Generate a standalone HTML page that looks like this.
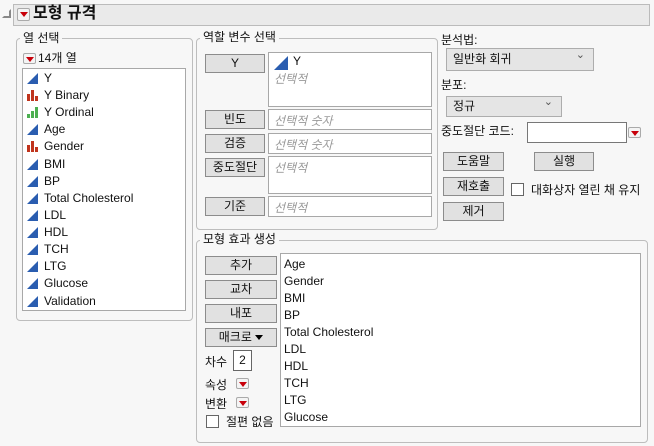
<!DOCTYPE html>
<html><head><meta charset="utf-8"><style>
*{box-sizing:border-box;margin:0;padding:0}
body{width:654px;height:446px;background:#f7f7f7;font-family:"Liberation Sans","Noto Sans CJK KR",sans-serif;font-size:12px;color:#111;position:relative;overflow:hidden}
.a{position:absolute;white-space:nowrap}
.grp{position:absolute;border:1px solid #bdbdbd;border-radius:4px}
.lg{position:absolute;background:#f7f7f7;padding:0 3px;font-size:12px;line-height:14px}
.box{position:absolute;background:#fff;border:1px solid #a8a8a8}
.btn{position:absolute;background:#e1e1e1;border:1px solid #8c8c8c;text-align:center;font-size:12px;line-height:16px;white-space:nowrap}
.rb{position:absolute;width:13px;height:11px;border:1px solid #aaa;border-radius:2px;background:#f4f4f4}
.rb:after{content:"";position:absolute;left:2px;top:3px;border-left:4px solid transparent;border-right:4px solid transparent;border-top:5px solid #c8000a}
.ph{color:#999;font-style:italic}
.it{position:absolute;left:0;width:340px;height:17px;line-height:17px;white-space:nowrap}
.cb{position:absolute;width:13px;height:13px;border:1px solid #666;background:#fff}
.sel{position:absolute;background:#e5e5e5;border:1px solid #adadad;line-height:20px;padding-left:6px}
.sel:after{content:"⌄";position:absolute;right:8px;top:-4px;font-size:11px;color:#555}
</style></head><body>
<div class="a" style="left:2px;top:9px;width:0;height:0;border-left:9px solid transparent;border-bottom:9px solid #888"></div>
<div class="a" style="left:3px;top:10px;width:0;height:0;border-left:6px solid transparent;border-bottom:6px solid #f7f7f7"></div>
<div class="a" style="left:13px;top:4px;width:637px;height:22px;background:#eaeaea;border:1px solid #bbb"></div>
<div class="rb" style="left:17px;top:8px;height:13px"></div>
<div class="a" style="left:33px;top:4px;font-size:16px;font-weight:bold;line-height:20px">모형 규격</div>

<div class="grp" style="left:16px;top:38px;width:177px;height:283px"></div>
<div class="lg" style="left:20px;top:31px">열 선택</div>
<div class="rb" style="left:23px;top:53px"></div>
<div class="a" style="left:38px;top:51px;line-height:14px">14개 열</div>
<div class="box" style="left:22px;top:68px;width:164px;height:243px">
<svg width="0" height="0" style="position:absolute"><defs>
<g id="c"><path d="M0 11 L11 0 L11 11Z" fill="#2a5db0"/></g>
<g id="n"><rect x="0" y="4" width="3" height="7" fill="#c0341d"/><rect x="4" y="0" width="3" height="11" fill="#c0341d"/><rect x="8" y="6" width="3" height="5" fill="#c0341d"/></g>
<g id="o"><rect x="0" y="7" width="3" height="4" fill="#4caf50"/><rect x="4" y="4" width="3" height="7" fill="#4caf50"/><rect x="8" y="0" width="3" height="11" fill="#4caf50"/></g>
</defs></svg>
<div style="position:absolute;left:4px;top:1px;width:155px">
<div class="it" style="top:0"><svg class="a" style="left:0;top:3px" width="11" height="11"><use href="#c"/></svg><span style="margin-left:17px">Y</span></div>
<div class="it" style="top:17px"><svg class="a" style="left:0;top:3px" width="11" height="11"><use href="#n"/></svg><span style="margin-left:17px">Y Binary</span></div>
<div class="it" style="top:34px"><svg class="a" style="left:0;top:3px" width="11" height="11"><use href="#o"/></svg><span style="margin-left:17px">Y Ordinal</span></div>
<div class="it" style="top:51px"><svg class="a" style="left:0;top:3px" width="11" height="11"><use href="#c"/></svg><span style="margin-left:17px">Age</span></div>
<div class="it" style="top:68px"><svg class="a" style="left:0;top:3px" width="11" height="11"><use href="#n"/></svg><span style="margin-left:17px">Gender</span></div>
<div class="it" style="top:86px"><svg class="a" style="left:0;top:3px" width="11" height="11"><use href="#c"/></svg><span style="margin-left:17px">BMI</span></div>
<div class="it" style="top:103px"><svg class="a" style="left:0;top:3px" width="11" height="11"><use href="#c"/></svg><span style="margin-left:17px">BP</span></div>
<div class="it" style="top:120px"><svg class="a" style="left:0;top:3px" width="11" height="11"><use href="#c"/></svg><span style="margin-left:17px">Total Cholesterol</span></div>
<div class="it" style="top:137px"><svg class="a" style="left:0;top:3px" width="11" height="11"><use href="#c"/></svg><span style="margin-left:17px">LDL</span></div>
<div class="it" style="top:154px"><svg class="a" style="left:0;top:3px" width="11" height="11"><use href="#c"/></svg><span style="margin-left:17px">HDL</span></div>
<div class="it" style="top:171px"><svg class="a" style="left:0;top:3px" width="11" height="11"><use href="#c"/></svg><span style="margin-left:17px">TCH</span></div>
<div class="it" style="top:188px"><svg class="a" style="left:0;top:3px" width="11" height="11"><use href="#c"/></svg><span style="margin-left:17px">LTG</span></div>
<div class="it" style="top:205px"><svg class="a" style="left:0;top:3px" width="11" height="11"><use href="#c"/></svg><span style="margin-left:17px">Glucose</span></div>
<div class="it" style="top:223px"><svg class="a" style="left:0;top:3px" width="11" height="11"><use href="#c"/></svg><span style="margin-left:17px">Validation</span></div>
</div></div>

<div class="grp" style="left:196px;top:38px;width:242px;height:192px"></div>
<div class="lg" style="left:200px;top:30px">역할 변수 선택</div>
<div class="btn" style="left:205px;top:54px;width:60px;height:19px">Y</div>
<div class="btn" style="left:205px;top:110px;width:60px;height:19px">빈도</div>
<div class="btn" style="left:205px;top:134px;width:60px;height:19px">검증</div>
<div class="btn" style="left:205px;top:158px;width:60px;height:19px">중도절단</div>
<div class="btn" style="left:205px;top:197px;width:60px;height:19px">기준</div>
<div class="box" style="left:268px;top:52px;width:164px;height:55px"><svg class="a" style="left:5px;top:3px" width="14" height="14"><path d="M0 14 L14 0 L14 14Z" fill="#2a5db0"/></svg><span class="a" style="left:24px;top:1px">Y</span><span class="a ph" style="left:5px;top:17px">선택적</span></div>
<div class="box" style="left:268px;top:109px;width:164px;height:21px"><span class="a ph" style="left:5px;top:2px">선택적 숫자</span></div>
<div class="box" style="left:268px;top:133px;width:164px;height:21px"><span class="a ph" style="left:5px;top:2px">선택적 숫자</span></div>
<div class="box" style="left:268px;top:156px;width:164px;height:38px"><span class="a ph" style="left:5px;top:2px">선택적</span></div>
<div class="box" style="left:268px;top:196px;width:164px;height:21px"><span class="a ph" style="left:5px;top:2px">선택적</span></div>

<div class="a" style="left:441px;top:31px">분석법:</div>
<div class="sel" style="left:446px;top:48px;width:148px;height:23px">일반화 회귀</div>
<div class="a" style="left:441px;top:76px">분포:</div>
<div class="sel" style="left:446px;top:96px;width:116px;height:21px;line-height:18px">정규</div>
<div class="a" style="left:441px;top:122px">중도절단 코드:</div>
<div class="box" style="left:527px;top:122px;width:100px;height:21px;border-color:#777"></div>
<div class="rb" style="left:628px;top:127px"></div>
<div class="btn" style="left:443px;top:152px;width:61px;height:19px">도움말</div>
<div class="btn" style="left:534px;top:152px;width:60px;height:19px">실행</div>
<div class="btn" style="left:443px;top:177px;width:61px;height:19px">재호출</div>
<div class="cb" style="left:511px;top:183px"></div>
<div class="a" style="left:531px;top:181px">대화상자 열린 채 유지</div>
<div class="btn" style="left:443px;top:202px;width:61px;height:19px">제거</div>

<div class="grp" style="left:196px;top:240px;width:452px;height:203px"></div>
<div class="lg" style="left:200px;top:232px">모형 효과 생성</div>
<div class="btn" style="left:205px;top:256px;width:72px;height:19px">추가</div>
<div class="btn" style="left:205px;top:280px;width:72px;height:19px">교차</div>
<div class="btn" style="left:205px;top:304px;width:72px;height:19px">내포</div>
<div class="btn" style="left:205px;top:328px;width:72px;height:19px">매크로 <span style="display:inline-block;width:0;height:0;border-left:4px solid transparent;border-right:4px solid transparent;border-top:5px solid #000;vertical-align:middle"></span></div>
<div class="a" style="left:205px;top:353px">차수</div>
<div class="box" style="left:233px;top:350px;width:19px;height:21px;border-color:#666;text-align:center;line-height:18px">2</div>
<div class="a" style="left:205px;top:376px">속성</div>
<div class="rb" style="left:236px;top:378px"></div>
<div class="a" style="left:205px;top:395px">변환</div>
<div class="rb" style="left:236px;top:397px"></div>
<div class="cb" style="left:206px;top:415px"></div>
<div class="a" style="left:226px;top:413px">절편 없음</div>
<div class="box" style="left:280px;top:253px;width:361px;height:174px">
<div style="position:absolute;left:3px;top:2px;width:350px">
<div class="it" style="top:0">Age</div><div class="it" style="top:17px">Gender</div><div class="it" style="top:34px">BMI</div><div class="it" style="top:51px">BP</div><div class="it" style="top:68px">Total Cholesterol</div><div class="it" style="top:85px">LDL</div><div class="it" style="top:102px">HDL</div><div class="it" style="top:119px">TCH</div><div class="it" style="top:136px">LTG</div><div class="it" style="top:153px">Glucose</div>
</div></div>
</body></html>
